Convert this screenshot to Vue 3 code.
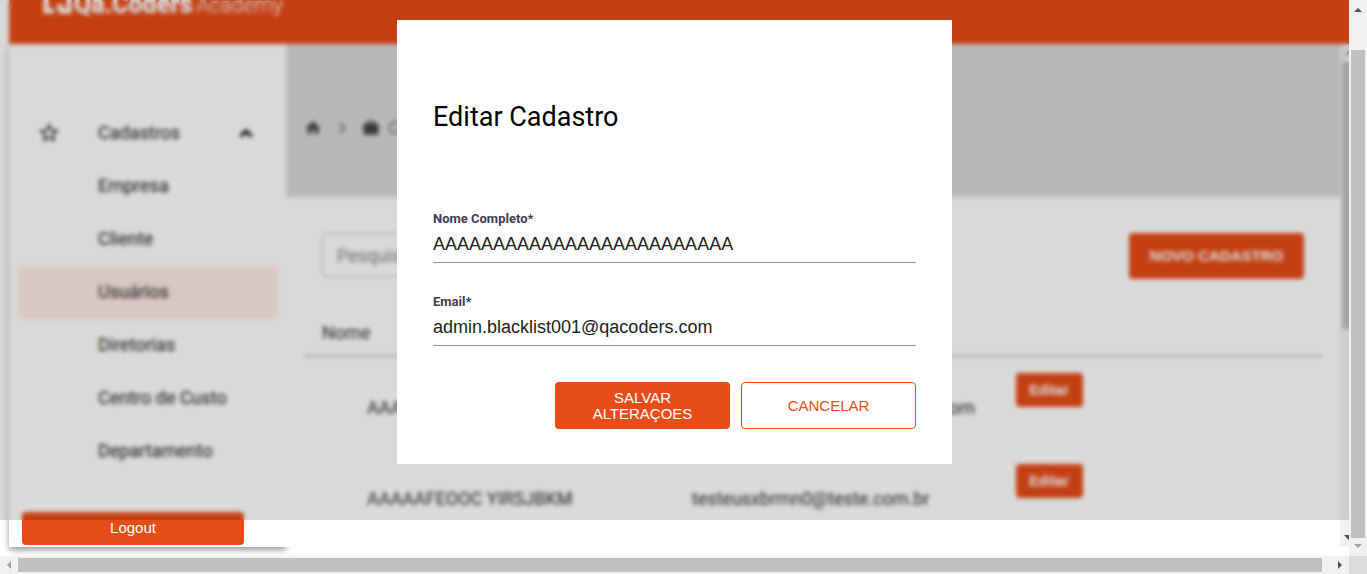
<script setup>
import { ref } from 'vue'

const nome = ref('AAAAAAAAAAAAAAAAAAAAAAAAA')
const email = ref('admin.blacklist001@qacoders.com')
const busca = ref('')

const menu = [
  { label: 'Empresa' },
  { label: 'Cliente' },
  { label: 'Usuários', active: true },
  { label: 'Diretorias' },
  { label: 'Centro de Custo' },
  { label: 'Departamento' },
]

const usuarios = [
  { nome: 'AAAAAAAAAAAAAAAAAAAAAAAAA', email: 'admin.blacklist001@qacoders.com' },
  { nome: 'AAAAAFEOOC YIRSJBKM', email: 'testeusxbrmn0@teste.com.br' },
]
</script>

<template>
  <div class="window">
    <div class="viewport">
      <div class="page">
        <header class="topbar">
          <svg class="mark" width="30" height="24" viewBox="0 0 30 24" aria-hidden="true">
            <path d="M11 2H4V20H12M17 20H27V2H17M18 13V20" fill="none" stroke="currentColor" stroke-width="5" />
          </svg>
          <strong class="brand">Qa.Coders</strong>
          <span class="brand-sub">Academy</span>
        </header>

        <div class="body">
          <aside class="sidebar">
            <nav>
              <button class="item group" type="button">
                <svg class="star" width="24" height="24" viewBox="0 0 24 24" aria-hidden="true">
                  <path fill="currentColor" d="M22 9.24l-7.19-.62L12 2 9.19 8.63 2 9.24l5.46 4.73L5.82 21 12 17.27 18.18 21l-1.63-7.03L22 9.24zM12 15.4l-3.76 2.27 1-4.28-3.32-2.88 4.38-.38L12 6.1l1.71 4.04 4.38.38-3.32 2.88 1 4.28L12 15.4z" />
                </svg>
                <span>Cadastros</span>
                <svg class="caret" width="24" height="24" viewBox="0 0 24 24" aria-hidden="true">
                  <path d="M6.5 15.500L12 10L17.500 15.500" fill="none" stroke="currentColor" stroke-width="3.500" />
                </svg>
              </button>
              <a v-for="m in menu" :key="m.label" href="#" class="item" :class="{ active: m.active }">{{ m.label }}</a>
            </nav>
            <button class="logout" type="button">Logout</button>
          </aside>

          <main class="content">
            <div class="banner">
              <svg width="18" height="18" viewBox="0 0 24 24" aria-hidden="true">
                <path fill="currentColor" d="M10 20v-6h4v6h5v-8h3L12 3 2 12h3v8z" />
              </svg>
              <svg class="sep" width="18" height="18" viewBox="0 0 24 24" aria-hidden="true">
                <path d="M9 5l6.500 7L9 19" fill="none" stroke="currentColor" stroke-width="2.500" />
              </svg>
              <svg width="18" height="18" viewBox="0 0 24 24" aria-hidden="true">
                <path fill="currentColor" d="M22 6h-5V4l-2-2H9L7 4v2H2v15h20V6zM9 6V4h6v2H9z" />
              </svg>
              <span class="crumb">Cadastros</span>
            </div>

            <div class="panel">
              <div class="tools">
                <input v-model="busca" class="search" type="text" placeholder="Pesquisar" aria-label="Pesquisar" />
                <button class="btn primary" type="button">NOVO CADASTRO</button>
              </div>
              <table>
                <thead>
                  <tr><th>Nome</th><th>Email</th><th></th><th></th></tr>
                </thead>
                <tbody>
                  <tr v-for="u in usuarios" :key="u.email">
                    <td>{{ u.nome }}</td>
                    <td>{{ u.email }}</td>
                    <td class="action"><button class="edit" type="button">Editar</button></td>
                    <td></td>
                  </tr>
                </tbody>
              </table>
            </div>
          </main>

          <div class="innerbar" aria-hidden="true">
            <svg width="17" height="18" viewBox="0 0 17 18"><path fill="#a3a3a3" d="M4 11h9L8.500 6z" /></svg>
            <div class="inner-thumb"></div>
            <svg width="17" height="18" viewBox="0 0 17 18"><path fill="#505050" d="M4 6h9l-4.500 5z" /></svg>
          </div>
        </div>
      </div>

      <div class="overlay">
        <form class="modal" role="dialog" aria-labelledby="titulo" @submit.prevent>
          <h1 id="titulo">Editar Cadastro</h1>
          <div class="field">
            <label for="nome">Nome Completo*</label>
            <input id="nome" v-model="nome" type="text" />
          </div>
          <div class="field">
            <label for="email">Email*</label>
            <input id="email" v-model="email" type="email" />
          </div>
          <div class="actions">
            <button class="btn primary" type="submit">SALVAR ALTERAÇOES</button>
            <button class="btn outline" type="button">CANCELAR</button>
          </div>
        </form>
      </div>
    </div>

    <div class="vbar" aria-hidden="true">
      <svg width="18" height="18" viewBox="0 0 18 18"><path fill="#505050" d="M5 12h8L9 8z" /></svg>
      <div class="vtrack"><div class="vthumb"></div></div>
      <svg width="18" height="18" viewBox="0 0 18 18"><path fill="#a3a3a3" d="M5 6h8l-4 4z" /></svg>
    </div>
    <div class="hbar" aria-hidden="true">
      <svg width="18" height="18" viewBox="0 0 18 18"><path fill="#a3a3a3" d="M11 5v8L7 9z" /></svg>
      <div class="hthumb"></div>
      <svg class="harrow" width="18" height="18" viewBox="0 0 18 18"><path fill="#505050" d="M7 5v8l4-4z" /></svg>
    </div>
    <div class="corner"></div>
  </div>
</template>

<style>
body {
  overflow: hidden;
}
</style>

<style scoped>
* {
  box-sizing: border-box;
}
.window {
  display: grid;
  grid-template: minmax(0, 1fr) 18px / minmax(0, 1fr) 18px;
  height: 100vh;
  background: #fff;
  font-family: Roboto, "Liberation Sans", sans-serif;
  color: #333;
}
svg {
  display: block;
  flex: none;
}
button {
  font-family: "Liberation Sans", Arial, sans-serif;
  font-size: 15px;
  line-height: 16px;
  border: 0;
  cursor: pointer;
}
.viewport {
  position: relative;
  overflow: hidden;
}
.page {
  display: flex;
  flex-direction: column;
  height: calc(100% + 15px);
  margin: -24px -8px 0 9px;
}
.topbar {
  flex: none;
  display: flex;
  align-items: flex-end;
  height: 68px;
  padding: 0 33px 27px;
  background: #e74c18;
  color: #fff;
  line-height: 24px;
}
.mark {
  margin: 0 2px 2px 0;
}
.brand {
  font-size: 25px;
  font-weight: 900;
}
.brand-sub {
  margin-left: 4px;
  font-size: 21px;
  font-weight: 300;
}
.body {
  flex: 1;
  display: flex;
  min-height: 0;
}
.sidebar {
  display: flex;
  flex-direction: column;
  justify-content: space-between;
  width: 277px;
  flex: none;
  padding: 63px 8px 2px 9px;
  background: #fff;
  box-shadow: 0 3px 6px rgba(0, 0, 0, 0.4);
}
.item {
  display: flex;
  align-items: center;
  width: 100%;
  height: 53px;
  padding: 0 20px 2px 80px;
  border-radius: 2px;
  background: none;
  color: #222;
  font-family: Roboto, sans-serif;
  font-size: 18px;
  font-weight: 400;
  text-decoration: none;
}
.group {
  padding-left: 19px;
}
.star {
  margin-right: 37px;
}
.caret {
  margin-left: auto;
}
.item.active {
  background: #fdebe6;
}
.logout {
  width: 222px;
  height: 33px;
  margin-left: 4px;
  padding-bottom: 2px;
  flex: none;
  border-radius: 4px;
  background: #e74c18;
  color: #fff;
}
.content {
  flex: 1;
  min-width: 0;
  overflow: hidden;
  background: #fff;
}
.banner {
  display: flex;
  align-items: center;
  height: 153px;
  padding: 14px 18px 0;
  gap: 11px;
  background: #d9d9d9;
  color: #444;
}
.sep,
.crumb {
  color: #777;
}
.crumb {
  margin-left: -3px;
  font-size: 18px;
}
.panel {
  padding: 36px 18px;
}
.tools {
  display: flex;
  justify-content: space-between;
  padding: 0 18px;
}
.search {
  width: 300px;
  height: 44px;
  padding: 0 14px;
  border: 1px solid #bbb;
  border-radius: 4px;
  background: transparent;
  font-family: Roboto, sans-serif;
  font-size: 18px;
}
.search::placeholder {
  color: #888;
}
.btn {
  width: 175px;
  height: 47px;
  padding: 0 30px;
  border-radius: 4px;
}
.tools .btn {
  height: 46px;
  padding: 0;
  font-weight: 700;
}
.primary {
  background: #e74c18;
  color: #fff;
}
.outline {
  border: 1px solid #e74c18;
  background: #fff;
  color: #e74c18;
}
table {
  width: 100%;
  table-layout: fixed;
  border-collapse: separate;
  border-spacing: 0;
  font-size: 18px;
  line-height: 24px;
}
th {
  width: 325px;
  padding: 42px 18px 10px;
  border-bottom: 2px solid #c0c0c0;
  text-align: left;
  font-weight: 400;
}
th:first-child,
th:nth-child(2) {
  width: 32%;
}
th:last-child {
  width: auto;
  padding: 0;
}
td {
  height: 91px;
  padding: 39px 0 0 62px;
  vertical-align: top;
  white-space: nowrap;
}
td:first-child {
  padding-left: 63px;
}
td:last-child {
  padding: 0;
}
td.action {
  padding: 16px 0 0 60px;
}
.edit {
  display: block;
  width: 67px;
  height: 34px;
  padding: 0;
  border-radius: 4px;
  background: #e74c18;
  color: #fff;
  font-size: 14px;
  font-weight: 700;
}
.innerbar {
  flex: none;
  display: flex;
  flex-direction: column;
  width: 17px;
  background: #f1f1f1;
}
.inner-thumb {
  height: 53%;
  width: 13px;
  margin: 0 auto auto;
  background: #c1c1c1;
}
.overlay {
  position: absolute;
  inset: 0 0 36px;
  display: flex;
  justify-content: center;
  align-items: flex-start;
  padding-top: 20px;
  background: rgba(0, 0, 0, 0.15);
  backdrop-filter: blur(2px);
}
.modal {
  width: 555px;
  padding: 81px 36px 35px;
  background: #fff;
}
h1 {
  margin: 0 0 77px;
  color: #000;
  font-size: 27px;
  line-height: 32px;
  font-weight: 400;
}
.field {
  margin-bottom: 30px;
}
.field label {
  display: block;
  color: #3f3d56;
  font-size: 13px;
  line-height: 17px;
  font-weight: 700;
}
.field input {
  display: block;
  width: 100%;
  height: 36px;
  padding: 0;
  border: 0;
  border-bottom: 1px solid #949494;
  border-radius: 0;
  outline: 0;
  background: transparent;
  color: #212121;
  font-family: "Liberation Sans", Arial, sans-serif;
  font-size: 18px;
}
.actions {
  display: flex;
  justify-content: flex-end;
  gap: 11px;
  margin-top: 36px;
}
.vbar {
  display: flex;
  flex-direction: column;
  background: #f1f1f1;
}
.vtrack {
  flex: 1;
  display: flex;
  padding: 32px 2px 0;
}
.vthumb {
  flex: 1;
  background: #c1c1c1;
}
.hbar {
  display: flex;
  align-items: center;
  background: #f1f1f1;
}
.hthumb {
  flex: 1;
  height: 14px;
  background: #c1c1c1;
}
.harrow {
  margin-left: 9px;
}
.corner {
  background: #dcdcdc;
}
</style>
